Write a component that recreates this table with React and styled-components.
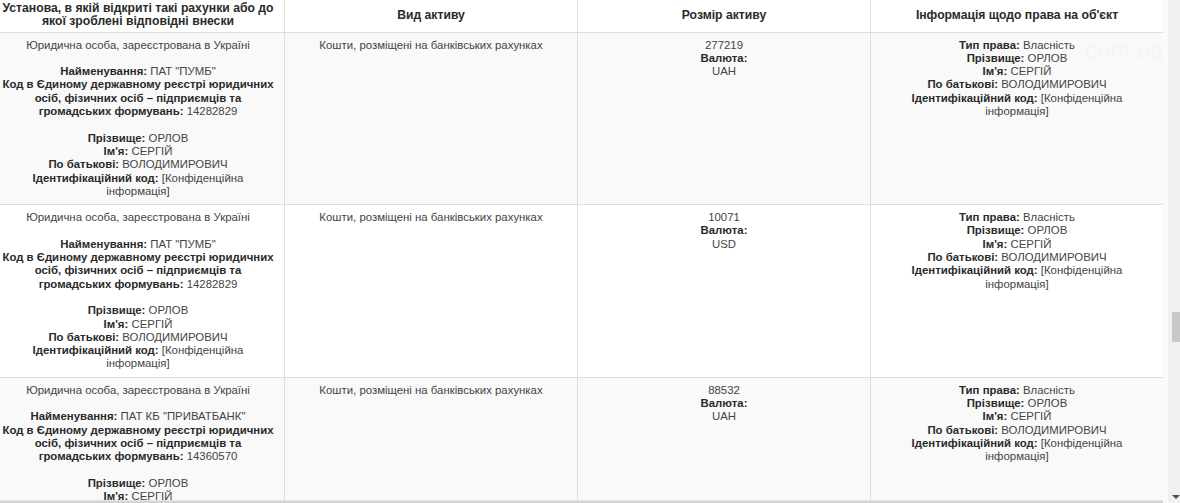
import React from "react";
import styled, { createGlobalStyle } from "styled-components";

const Global = createGlobalStyle`
  html, body { margin: 0; padding: 0; background: #fff; overflow: hidden; }
  body { font-family: "Liberation Sans", Arial, sans-serif; }
`;

const Viewport = styled.div`
  display: flex;
  width: 1180px;
  height: 503px;
  overflow: hidden;
  background: #fff;
`;

const Main = styled.div`
  flex: 1;
  display: flex;
  flex-direction: column;
  overflow: hidden;
  min-width: 0;
`;

const TableArea = styled.div`
  flex: 1;
  overflow: hidden;
  position: relative;
`;

const BottomEdge = styled.div`
  height: 2px;
  background: #d4d4d4;
  border-top: 1px solid #e6e6e6;
`;

const Table = styled.table`
  border-collapse: collapse;
  margin-left: -9px;
  width: 1172px;
  table-layout: fixed;
  font-size: 11.4px;
  line-height: 13.3px;
  color: #444;
`;

const Th = styled.th`
  border: 1px solid #dedede;
  border-top: none;
  background: #fff;
  color: #2a2a2a;
  font-weight: bold;
  font-size: 12.2px;
  padding: 2px 6px 3px;
  height: 26px;
  text-align: center;
  vertical-align: middle;
`;

const Tr = styled.tr`
  background: ${(p) => (p.$shaded ? "#f9f9f9" : "#fff")};
`;

const Td = styled.td`
  border: 1px solid #dedede;
  padding: 6px 8px 6px;
  text-align: center;
  vertical-align: top;
`;

const Label = styled.b`
  color: #2a2a2a;
`;

const Watermark = styled.div`
  position: absolute;
  top: 36px;
  left: 1085px;
  font-size: 24px;
  font-family: "Liberation Sans", Arial, sans-serif;
  color: rgba(120, 120, 120, 0.05);
  pointer-events: none;
`;

const Scrollbar = styled.div`
  width: 17px;
  display: flex;
  flex-direction: column;
  background: linear-gradient(to right, #fafafa 0, #fafafa 5px, #f1f1f1 5px);
`;

const Thumb = styled.div`
  margin-top: 312px;
  margin-left: 9px;
  width: 8px;
  height: 30px;
  background: #c8c8c8;
`;

const Arrow = styled.div`
  margin-top: auto;
  margin-left: 9px;
  margin-bottom: 4px;
  width: 0;
  height: 0;
  border-left: 4px solid transparent;
  border-right: 4px solid transparent;
  border-top: 4px solid #505050;
`;

const rows = [
  { name: 'ПАТ "ПУМБ"', code: "14282829", amount: "277219", currency: "UAH" },
  { name: 'ПАТ "ПУМБ"', code: "14282829", amount: "10071", currency: "USD" },
  { name: 'ПАТ КБ "ПРИВАТБАНК"', code: "14360570", amount: "88532", currency: "UAH" },
];

function Person() {
  return (
    <>
      <Label>Прізвище:</Label> ОРЛОВ
      <br />
      <Label>Ім'я:</Label> СЕРГІЙ
      <br />
      <Label>По батькові:</Label> ВОЛОДИМИРОВИЧ
      <br />
      <Label>Ідентифікаційний код:</Label> [Конфіденційна інформація]
    </>
  );
}

export default function App() {
  return (
    <Viewport>
      <Global />
      <Main>
        <TableArea>
          <Table>
            <colgroup>
              <col style={{ width: 293 }} />
              <col style={{ width: 293 }} />
              <col style={{ width: 293 }} />
              <col style={{ width: 293 }} />
            </colgroup>
            <thead>
              <tr>
                <Th>Установа, в якій відкриті такі рахунки або до якої зроблені відповідні внески</Th>
                <Th>Вид активу</Th>
                <Th>Розмір активу</Th>
                <Th>Інформація щодо права на об'єкт</Th>
              </tr>
            </thead>
            <tbody>
              {rows.map((r, i) => (
                <Tr key={i} $shaded={i % 2 === 0}>
                  <Td>
                    Юридична особа, зареєстрована в Україні
                    <br />
                    <br />
                    <Label>Найменування:</Label> {r.name}
                    <br />
                    <Label>Код в Єдиному державному реєстрі юридичних осіб, фізичних осіб – підприємців та громадських формувань:</Label> {r.code}
                    <br />
                    <br />
                    <Person />
                  </Td>
                  <Td>Кошти, розміщені на банківських рахунках</Td>
                  <Td>
                    {r.amount}
                    <br />
                    <Label>Валюта:</Label>
                    <br />
                    {r.currency}
                  </Td>
                  <Td>
                    <Label>Тип права:</Label> Власність
                    <br />
                    <Person />
                  </Td>
                </Tr>
              ))}
            </tbody>
          </Table>
          <Watermark>com.ua</Watermark>
        </TableArea>
        <BottomEdge />
      </Main>
      <Scrollbar>
        <Thumb />
        <Arrow />
      </Scrollbar>
    </Viewport>
  );
}
